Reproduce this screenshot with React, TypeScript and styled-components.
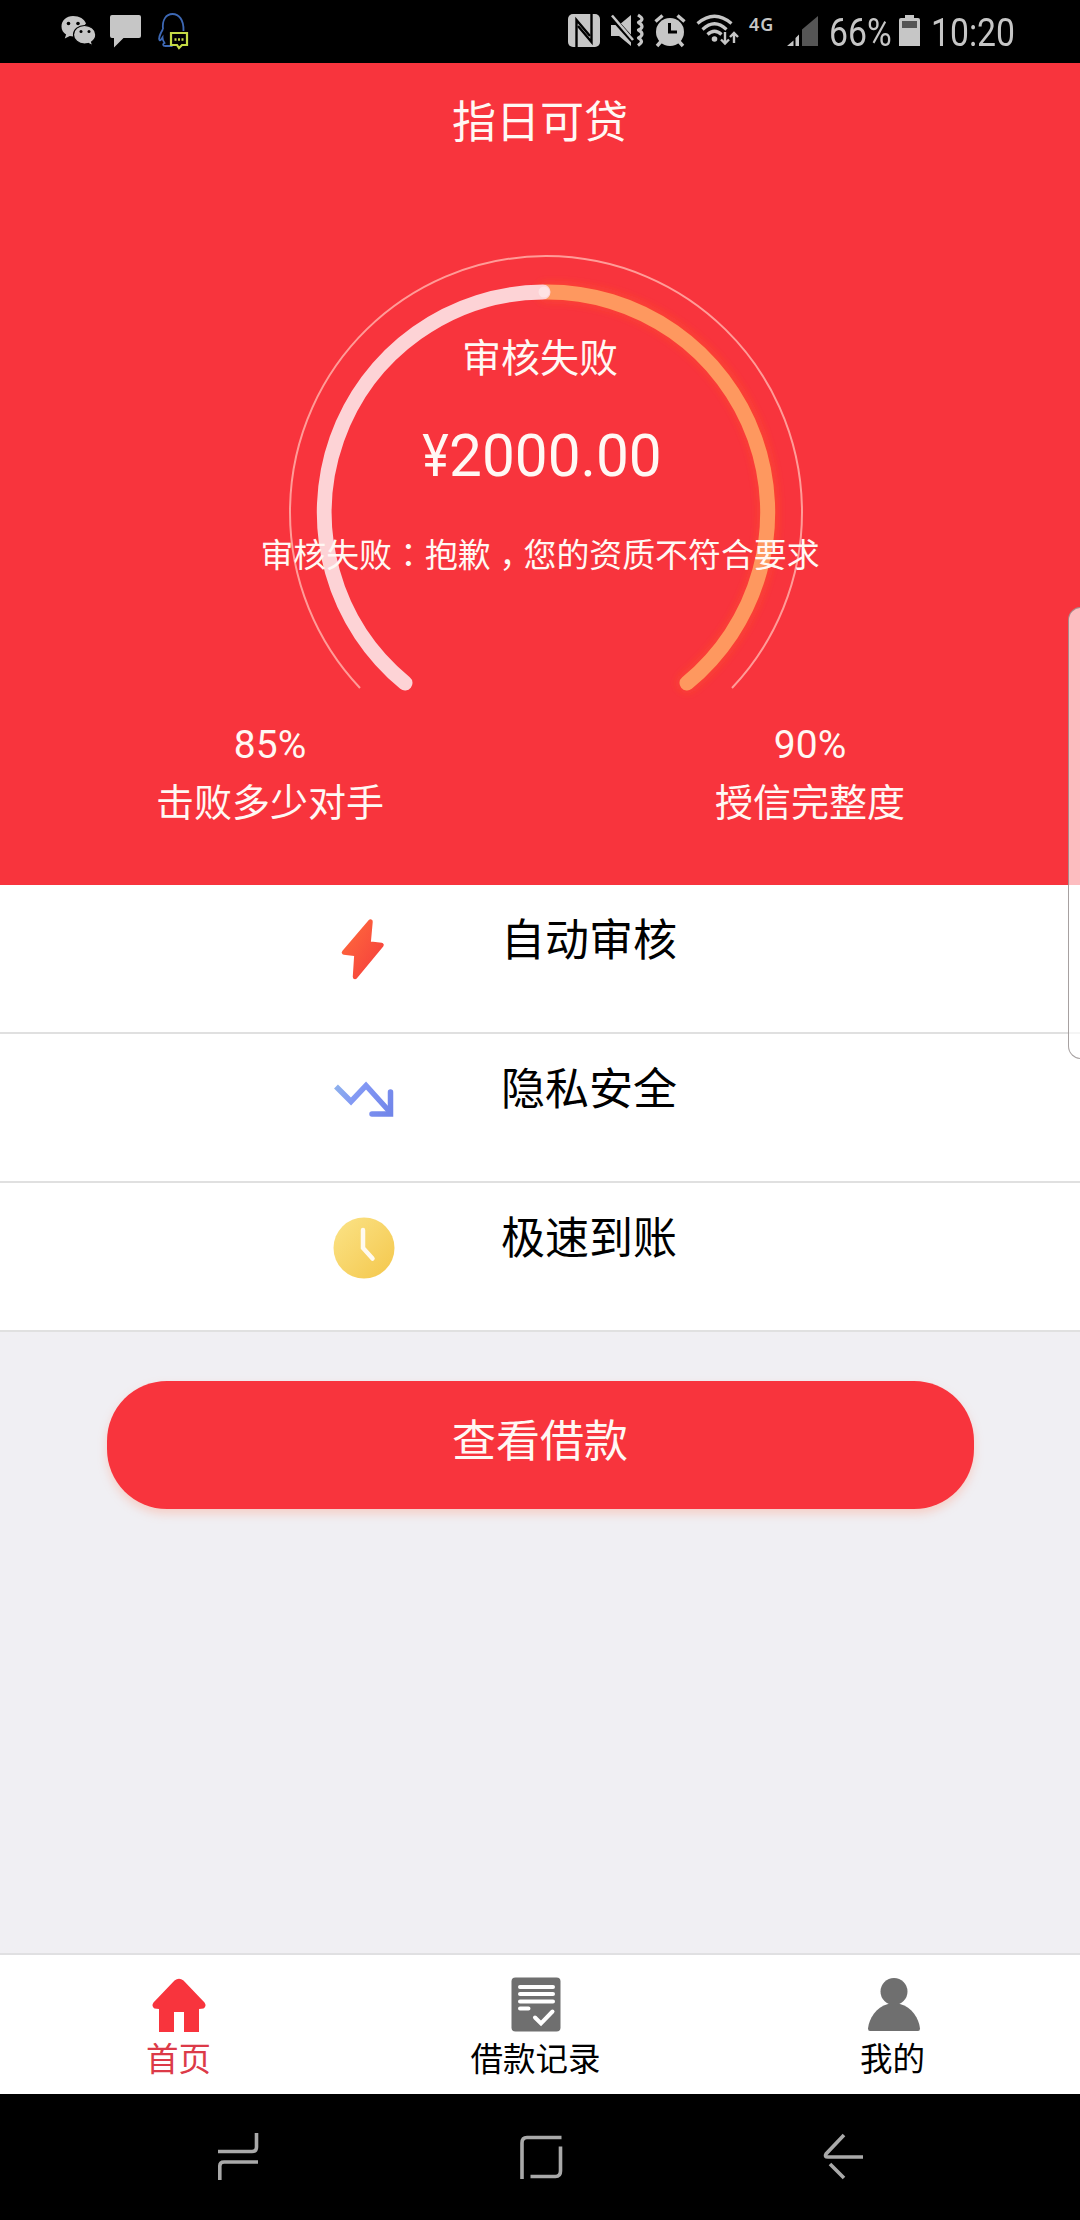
import React from "react";
import styled, { createGlobalStyle } from "styled-components";

const RED = "#f8343d";
const GREY = "#6f6f6f";
const SYS = "#c6c6c6";

const GlobalStyle = createGlobalStyle`
  *, *::before, *::after { box-sizing: border-box; }
  body {
    margin: 0;
    background: #000;
    font-family: Roboto, "Noto Sans CJK SC", sans-serif;
  }
  svg { display: block; flex: none; }
`;

const Screen = styled.div`
  position: relative;
  display: flex;
  flex-direction: column;
  width: 1080px;
  height: 2220px;
  overflow: hidden;
  background: #f0eff3;
`;

/* ---------- system status bar ---------- */
const StatusBar = styled.header`
  display: flex;
  justify-content: space-between;
  height: 63px;
  flex: none;
  padding: 0 65px 0 60px;
  background: #000;
  color: ${SYS};
`;

const StatusGroup = styled.div`
  display: flex;
  align-items: flex-start;
`;

const StatusIcon = styled.svg<{ $gap?: number }>`
  margin-top: 12px;
  margin-left: ${(p) => p.$gap ?? 0}px;
`;

const NetworkType = styled.span`
  width: 26px;
  margin: 12px 11px 0 9px;
  font: 600 18px/24px "Noto Sans", sans-serif;
  letter-spacing: 1px;
`;

const StatusText = styled.span<{ $width: number; $gap: number }>`
  width: ${(p) => p.$width}px;
  margin: 11px 0 0 ${(p) => p.$gap}px;
  font-size: 39px;
  line-height: 44px;
  white-space: nowrap;

  > span {
    display: inline-block;
    transform: scaleX(0.865);
    transform-origin: left center;
  }
`;

/* ---------- hero ---------- */
const Hero = styled.section`
  display: flex;
  flex-direction: column;
  flex: none;
  height: 822px;
  background: ${RED};
  color: #fff8f4;
`;

const Title = styled.h1`
  margin: 0;
  height: 118px;
  font-size: 44px;
  font-weight: 400;
  line-height: 121px;
  text-align: center;
`;

const Gauge = styled.div`
  display: grid;
  height: 534px;

  > * { grid-area: 1 / 1; }
`;

const GaugeText = styled.div`
  display: flex;
  flex-direction: column;
  align-items: center;
  z-index: 1;
  padding-top: 149px;
`;

const GaugeStatus = styled.div`
  font-size: 39px;
  line-height: 58px;
`;

const Amount = styled.div`
  margin-top: 32px;
  font-size: 58.5px;
  line-height: 72px;
`;

const Currency = styled.span`
  display: inline-block;
  transform: scaleX(0.86);
  transform-origin: right center;
`;

const Reason = styled.div`
  margin-top: 37px;
  font-size: 32.9px;
  line-height: 48px;
  white-space: nowrap;
`;

const Punctuation = styled.span<{ $drop?: number }>`
  display: inline-block;
  font-family: "Noto Sans CJK TC", sans-serif;
  transform: translateY(${(p) => p.$drop ?? 0}px);
`;

const Stats = styled.div`
  display: grid;
  grid-template-columns: 1fr 1fr;
  padding-top: 4px;
  text-align: center;
`;

const StatValue = styled.div`
  font-size: 39px;
  line-height: 52px;
`;

const StatLabel = styled.div`
  margin-top: 4px;
  font-size: 38px;
  line-height: 56px;
`;

/* ---------- feature list ---------- */
const FeatureList = styled.ul`
  flex: none;
  margin: 0;
  padding: 0;
  list-style: none;
`;

const Feature = styled.li`
  display: flex;
  height: 149px;
  padding-left: 328px;
  border-bottom: 2px solid #e0e0e0;
  background: #fff;
  color: #000;
`;

const FeatureIcon = styled.svg`
  margin-top: 28px;
`;

const FeatureLabel = styled.span`
  margin: 24px 0 0 101px;
  font-size: 44px;
  line-height: 64px;
`;

/* ---------- action ---------- */
const Action = styled.div`
  display: flex;
  flex: 1;
  align-items: flex-start;
  justify-content: center;
  padding-top: 49px;
`;

const LoanButton = styled.button`
  width: 867px;
  height: 128px;
  padding: 0 0 7px;
  border: 0;
  border-radius: 60px;
  background: ${RED};
  box-shadow: 0 5px 10px rgba(255, 150, 120, 0.35);
  color: #fff8f4;
  font: inherit;
  font-size: 44px;
  line-height: 64px;
`;

/* ---------- tab bar ---------- */
const TabBar = styled.nav`
  display: grid;
  grid-template-columns: repeat(3, 357px);
  flex: none;
  height: 141px;
  border-top: 2px solid #e0e0e2;
  background: #fff;
`;

const Tab = styled.a<{ $active?: boolean }>`
  display: flex;
  flex-direction: column;
  align-items: center;
  gap: 3px;
  padding-top: 22px;
  color: ${(p) => (p.$active ? "#dc3a48" : "#000")};
  font-size: 32.5px;
  line-height: 48px;
`;

/* ---------- system navigation ---------- */
const NavBar = styled.footer`
  display: flex;
  align-items: flex-start;
  justify-content: space-between;
  flex: none;
  height: 126px;
  padding: 37px 215px 0 216px;
  background: #000;
`;

const EdgeHandle = styled.div`
  position: absolute;
  top: 607px;
  right: -14px;
  width: 26px;
  height: 452px;
  border: 1.5px solid rgba(120, 110, 110, 0.65);
  border-radius: 18px;
  background: rgba(255, 255, 255, 0.68);
`;

const NavIcon = ({ d }: { d: string }) => (
  <svg width="44" height="50" viewBox="0 0 44 50" fill="none" stroke="#a9a9a9" strokeWidth="3.6">
    <path d={d} />
  </svg>
);

const features = [
  {
    label: "自动审核",
    icon: (
      <>
        <linearGradient id="bolt" x1="0" y1="0" x2="1" y2="1">
          <stop offset="0" stopColor="#ff6b3c" />
          <stop offset="1" stopColor="#f53d3d" />
        </linearGradient>
        <path
          d="M42.500 8.500 16 39.500 28.500 41 27 64 53.500 32 40.500 30.500Z"
          fill="url(#bolt)"
          stroke="url(#bolt)"
          strokeWidth="4.500"
          strokeLinejoin="round"
        />
      </>
    ),
  },
  {
    label: "隐私安全",
    icon: (
      <>
        <linearGradient id="trend" gradientUnits="userSpaceOnUse" x1="6" y1="20" x2="66" y2="56">
          <stop offset="0" stopColor="#8fb4ec" />
          <stop offset="0.4" stopColor="#8297f4" />
          <stop offset="1" stopColor="#6f83e8" />
        </linearGradient>
        <g fill="none" stroke="url(#trend)" strokeWidth="5.500">
          <path d="M8 24.500 23 39.500 38 23.500 61 49" strokeLinejoin="miter" />
          <path d="M44 52H62.500V30" strokeLinecap="round" />
        </g>
      </>
    ),
  },
  {
    label: "极速到账",
    icon: (
      <>
        <linearGradient id="clock" x1="0" y1="0" x2="1" y2="1">
          <stop offset="0" stopColor="#fbe387" />
          <stop offset="1" stopColor="#f4c74c" />
        </linearGradient>
        <circle cx="36" cy="37" r="30.500" fill="url(#clock)" />
        <path
          d="M35 19V37L44.500 47.500"
          fill="none"
          stroke="#fffaf0"
          strokeWidth="4.500"
          strokeLinecap="round"
        />
      </>
    ),
  },
];

export default function App() {
  return (
    <>
      <GlobalStyle />
      <Screen>
        <StatusBar>
          <StatusGroup>
            {/* WeChat */}
            <StatusIcon width="38" height="38" viewBox="0 0 38 38">
              <path
                d="M13 4C6.500 4 1.500 8.500 1.500 14.500c0 3.500 1.800 6.300 4.600 8.100L4.800 26.500l5-2.400c1.500.4 3 .5 4.700.4L26 11.500C24.500 7 19.500 4 13 4Z"
                fill={SYS}
              />
              <path
                d="M24.500 13.500c-6 0-11 4-11 9.200s5 9.300 11 9.300c1.300 0 2.500-.2 3.700-.5l4.600 2.400-1.200-4c2.600-1.700 4.200-4.200 4.200-7.200 0-5.200-5.200-9.200-11.300-9.200Z"
                fill={SYS}
                stroke="#000"
                strokeWidth="1.200"
              />
              <circle cx="8.500" cy="11.500" r="1.800" />
              <circle cx="18" cy="11.500" r="1.800" />
              <circle cx="21" cy="19.500" r="1.500" />
              <circle cx="29" cy="19.500" r="1.500" />
            </StatusIcon>
            {/* message */}
            <StatusIcon $gap={10} width="36" height="38" viewBox="0 0 36 38">
              <path d="M4 3H31Q33 3 33 5V24Q33 26 31 26H15.500L6 35.500V26H4Q2 26 2 24V5Q2 3 4 3Z" fill={SYS} />
            </StatusIcon>
            {/* QQ */}
            <StatusIcon $gap={12} width="36" height="38" viewBox="0 0 36 38" fill="none">
              <path
                d="M7 17C6 8 10 2 16.500 2S28 8 27.500 19M7 17c-3 5-4.500 10-3.500 11s2-1 3-2.500c0 2 1 4 2 5.500-2 1-2 3 1 3h7"
                stroke="#3d68b4"
                strokeWidth="1.800"
              />
              <path d="M15 21H31V33H26L23 36 21 33H15Z" stroke="#c5dc45" strokeWidth="2.200" />
              <path d="M18.500 27.500h2m1.500 0h2m1.500 0h2" stroke="#c5dc45" strokeWidth="2.400" />
            </StatusIcon>
          </StatusGroup>

          <StatusGroup>
            {/* NFC */}
            <StatusIcon width="34" height="38" viewBox="0 0 34 38">
              <rect x="1" y="2" width="32" height="33" rx="5" fill={SYS} />
              <path d="M9.500 35V8L23 24" fill="none" stroke="#000" strokeWidth="2.400" />
              <path d="M24.500 2V30L11 14" fill="none" stroke="#000" strokeWidth="2.400" />
            </StatusIcon>
            {/* muted, vibrating */}
            <StatusIcon $gap={8} width="37" height="38" viewBox="0 0 37 38">
              <path d="M2 13H10L22 3V34L10 24H2Z" fill={SYS} />
              <path d="M1 3 26 31" stroke="#000" strokeWidth="5" />
              <path d="M3 3.500 24 28" stroke={SYS} strokeWidth="2.600" />
              <path
                d="M29 3q4 2.500 4 4t-3.500 3.500q3.500 2 3.500 4t-3.500 3.500q3.500 2 3.500 4t-3.500 4q3 2 3 3.500t-3.500 4"
                fill="none"
                stroke={SYS}
                strokeWidth="3.200"
                strokeLinejoin="round"
              />
            </StatusIcon>
            {/* alarm */}
            <StatusIcon $gap={7} width="34" height="38" viewBox="0 0 34 38">
              <circle cx="17" cy="20" r="14" fill={SYS} />
              <path
                d="M2.500 9.500 9.500 3.500M24.500 3.500 31.500 9.500M8 29.500 4 34M26 29.500 30 34"
                stroke={SYS}
                strokeWidth="3.400"
              />
              <path d="M16.500 11V20H24" fill="none" stroke="#000" strokeWidth="3" />
            </StatusIcon>
            {/* wifi */}
            <StatusIcon $gap={9} width="44" height="38" viewBox="0 0 44 38" fill="none">
              <path
                d="M1.500 11.500Q18.500-3 35.500 11.500M6.500 17.500Q18.500 6 30.500 17.500M11.500 22.500Q18.500 16 25.500 22.500"
                stroke={SYS}
                strokeWidth="3.200"
              />
              <circle cx="18.500" cy="27" r="2.800" fill={SYS} />
              <path d="M29 20V31M25 27.500 29 31.500 33 27.500M38 31V21M34 25 38 21 42 25" stroke={SYS} strokeWidth="2.400" />
            </StatusIcon>
            <NetworkType>4G</NetworkType>
            {/* signal */}
            <StatusIcon width="34" height="38" viewBox="0 0 34 38">
              <path d="M16 17.500 32 4V34H16Z" fill="#555" />
              <path d="M1 34 7.500 28.500V34ZM9.500 26 13 22.500V34H9.500Z" fill={SYS} />
            </StatusIcon>
            <StatusText $width={62} $gap={9}><span>66%</span></StatusText>
            {/* battery */}
            <StatusIcon $gap={6} width="24" height="38" viewBox="0 0 24 38">
              <path d="M8 3H17V6H21Q23 6 23 8V34H2V8Q2 6 4 6H8Z" fill={SYS} />
              <rect x="5" y="9" width="15" height="7" fill="#555" />
            </StatusIcon>
            <StatusText $width={84} $gap={10}><span>10:20</span></StatusText>
          </StatusGroup>
        </StatusBar>

        <Hero>
          <Title>指日可贷</Title>
          <Gauge>
            <svg width="1080" height="534" viewBox="0 0 1080 534" fill="none">
              <filter id="glow" x="-20%" y="-20%" width="140%" height="140%">
                <feGaussianBlur stdDeviation="5" />
              </filter>
              <path d="M360 507A256 256 0 1 1 732 507" stroke="#ff9c98" strokeWidth="2" />
              <path
                d="M546 111A220 220 0 0 1 687 502"
                stroke="#ff5a20"
                strokeOpacity="0.5"
                strokeWidth="17"
                strokeLinecap="round"
                filter="url(#glow)"
              />
              <path d="M546 111A220.500 220.500 0 0 1 687 502" stroke="#fe985f" strokeWidth="15" strokeLinecap="round" />
              <path d="M405 502A220.500 220.500 0 0 1 543 111" stroke="#fdd3d6" strokeWidth="15" strokeLinecap="round" />
              <circle cx="544" cy="111" r="5.500" fill="#ffeeec" fillOpacity="0.6" />
            </svg>
            <GaugeText>
              <GaugeStatus>审核失败</GaugeStatus>
              <Amount><Currency>¥</Currency>2000.00</Amount>
              <Reason>
                审核失败<Punctuation lang="zh-Hant">：</Punctuation>抱歉
                <Punctuation lang="zh-Hant" $drop={10}>，</Punctuation>您的资质不符合要求
              </Reason>
            </GaugeText>
          </Gauge>
          <Stats>
            <div>
              <StatValue>85%</StatValue>
              <StatLabel>击败多少对手</StatLabel>
            </div>
            <div>
              <StatValue>90%</StatValue>
              <StatLabel>授信完整度</StatLabel>
            </div>
          </Stats>
        </Hero>

        <FeatureList>
          {features.map((f) => (
            <Feature key={f.label}>
              <FeatureIcon width="72" height="72" viewBox="0 0 72 72">{f.icon}</FeatureIcon>
              <FeatureLabel>{f.label}</FeatureLabel>
            </Feature>
          ))}
        </FeatureList>

        <Action>
          <LoanButton>查看借款</LoanButton>
        </Action>

        <TabBar>
          <Tab $active>
            <svg width="56" height="56" viewBox="0 0 56 56">
              <path
                d="M23.500 3.500Q28 0 32.500 3.500L53.500 25.500Q56 29 52.500 31.500L48 32V55H33V35H23V55H8V32L3.500 31.500Q0 29 2.500 25.500Z"
                fill={RED}
              />
            </svg>
            首页
          </Tab>
          <Tab>
            <svg width="56" height="56" viewBox="0 0 56 56">
              <rect x="3.500" y="0.500" width="49" height="54" rx="4" fill={GREY} />
              <g fill="none" stroke="#fff" strokeWidth="4" strokeLinecap="round">
                <path d="M12 10H45M12 17H45M12 24.500H45M12 31.500H20.500" />
                <path d="M27 40.500 33 46.500 44.500 34.500" />
              </g>
            </svg>
            借款记录
          </Tab>
          <Tab>
            <svg width="56" height="56" viewBox="0 0 56 56" fill={GREY}>
              <circle cx="29" cy="14.500" r="13.500" />
              <path d="M23 27H35C47 30 54 42 55 51.500Q55 54 53 54H5Q3 54 3 51.500C4 42 11 30 23 27Z" />
            </svg>
            我的
          </Tab>
        </TabBar>

        <NavBar>
          <NavIcon d="M40.500 2V16Q40.500 20.500 36 20.500H2M3.800 49V35Q3.800 31 8 31H42" />
          <NavIcon d="M3 48V12Q3 6.500 8 6.500H42.500M41.500 15.500V40Q41.500 45.500 36.500 45.500H11.500" />
          <NavIcon d="M23 4 5 23Q3 26 7 26H42M9 33 23 47" />
        </NavBar>

        <EdgeHandle />
      </Screen>
    </>
  );
}
